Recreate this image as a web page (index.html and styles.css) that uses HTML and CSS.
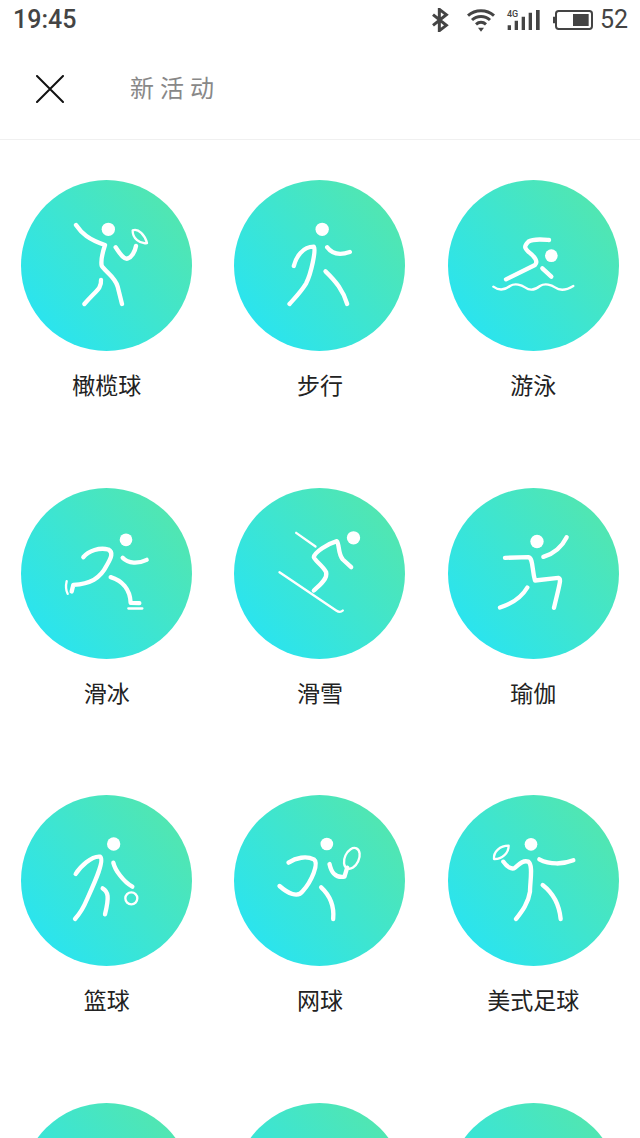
FILE: index.html
```html
<!DOCTYPE html>
<html lang="zh">
<head>
<meta charset="utf-8">
<title>新活动</title>
<link rel="stylesheet" href="styles.css">
</head>
<body>
<div class="page">
  <div class="status">
    <span class="time">19:45</span>
    <div class="status-right">
      <svg class="i-bt" viewBox="0 0 54 72"><path class="st" d="M6 20 L46 52 L25 68 L25 4 L46 20 L6 52"/></svg>
      <svg class="i-wifi" viewBox="0 0 84 69"><path class="st" d="M3 20 C25 0 59 0 81 20"/><path class="st" d="M15 33 C30 19 54 19 69 33"/><path class="st" d="M27 46 C36 38 48 38 57 46"/><path class="fl" d="M33 56 L51 56 L42 68 Z"/></svg>
      <span class="signal">
        <span class="net">4G</span>
        <svg class="i-sig" viewBox="0 0 99 60"><path class="fl" d="M2 46h10v14h-10zM23 32h10v28h-10zM44 20h10v40h-10zM65 8h10v52h-10zM87 0h11v60h-11z"/></svg>
      </span>
      <svg class="i-bat" viewBox="0 0 120 60"><rect class="bat" x="9" y="3" width="108" height="54" rx="8"/><path class="fl" d="M0 20h6v20h-6zM60 12h47v36h-47z"/></svg>
      <span class="level">52</span>
    </div>
  </div>
  <header class="nav">
    <svg class="close" viewBox="0 0 28 28"><path d="M1 1 L27 27 M27 1 L1 27"/></svg>
    <h1 class="title">新活动</h1>
  </header>
  <main class="grid">
    <div class="cell">
      <div class="disc"><svg class="fig" viewBox="-87 -60 513 513">
        <circle class="head" cx="175" cy="88" r="20"/>
        <path d="M78 75 C95 100 115 118 165 135 C160 150 152 180 155 197 C165 215 195 230 203 260 L216 312"/>
        <path d="M153 240 C155 265 140 270 103 312"/>
        <path d="M197 142 C210 160 220 178 232 176 C245 172 255 155 258 138"/>
        <path class="thin" d="M248 91 C265 84 285 105 291 129 C270 133 247 115 248 91 Z"/>
      </svg></div>
      <p class="label">橄榄球</p>
    </div>
    <div class="cell">
      <div class="disc"><svg class="fig" viewBox="-91.5 -60 513 513">
        <circle class="head" cx="173" cy="88" r="20"/>
        <path d="M88 198 C95 170 115 140 148 140 C155 150 140 220 125 250 C110 275 90 295 75 312"/>
        <path d="M183 214 C215 245 235 270 248 312"/>
        <path d="M188 142 C205 165 230 165 256 156"/>
      </svg></div>
      <p class="label">步行</p>
    </div>
    <div class="cell">
      <div class="disc"><svg class="fig" viewBox="-96 -90 513 513">
        <circle class="head" cx="214" cy="137" r="19"/>
        <path d="M207 90 C185 88 160 85 145 95 C130 110 135 115 145 125 C165 140 175 155 165 165 L78 208"/>
        <path d="M187 175 L214 200"/>
        <path class="thin" d="M40 230 C60 245 75 240 90 228 C105 218 125 225 135 232 C150 243 165 240 180 228 C195 218 215 225 225 232 C240 243 260 240 280 228"/>
      </svg></div>
      <p class="label">游泳</p>
    </div>
    <div class="cell">
      <div class="disc"><svg class="fig" viewBox="-87 -82.5 513 513">
        <circle class="head" cx="228" cy="73" r="19"/>
        <path d="M100 125 C115 105 150 95 175 102 C190 110 185 125 170 150 C150 190 120 205 70 208 L65 228"/>
        <path d="M182 185 C215 195 240 220 242 262 L268 263"/>
        <path d="M218 127 C235 145 265 145 290 133"/>
        <path class="thin" d="M50 197 C47 210 48 225 53 235"/>
        <path class="thin" d="M235 279 L277 279"/>
      </svg></div>
      <p class="label">滑冰</p>
    </div>
    <div class="cell">
      <div class="disc"><svg class="fig" viewBox="-91.5 -82.5 513 513">
        <circle class="head" cx="267" cy="67" r="20"/>
        <path d="M148 225 C165 210 190 190 185 170 C175 150 150 135 148 125 C150 110 190 85 217 77 C225 85 220 115 235 132 L260 155"/>
        <path class="thin" d="M95 52 L153 93"/>
        <path class="thin" d="M45 170 L215 285 C222 290 230 290 235 285"/>
      </svg></div>
      <p class="label">滑雪</p>
    </div>
    <div class="cell">
      <div class="disc"><svg class="fig" viewBox="-96 -82.5 513 513">
        <circle class="head" cx="171" cy="78" r="20"/>
        <path d="M190 124 C220 115 245 95 260 65"/>
        <path d="M75 127 L145 125 C160 128 155 160 165 195 L235 187 C245 190 240 200 222 277"/>
        <path d="M142 216 C125 245 95 265 60 276"/>
      </svg></div>
      <p class="label">瑜伽</p>
    </div>
    <div class="cell">
      <div class="disc"><svg class="fig" viewBox="-87 -90 513 513">
        <circle class="head" cx="191" cy="57" r="20"/>
        <path d="M77 147 C90 125 125 92 150 95 C165 105 135 170 110 225 C100 250 90 265 75 282"/>
        <path d="M190 113 C195 135 220 170 247 185"/>
        <path d="M158 190 C175 200 178 215 165 268"/>
        <circle class="thin" cx="244" cy="220" r="18"/>
      </svg></div>
      <p class="label">篮球</p>
    </div>
    <div class="cell">
      <div class="disc"><svg class="fig" viewBox="-91.5 -90 513 513">
        <circle class="head" cx="187" cy="57" r="19"/>
        <path d="M72 113 C95 98 125 92 148 103 C165 115 140 170 115 198 C100 220 70 205 45 183"/>
        <path d="M170 187 C195 210 210 240 206 282"/>
        <path d="M195 117 C200 140 210 160 240 155 L248 128"/>
        <ellipse class="thin" cx="262" cy="100" rx="21" ry="33" transform="rotate(25 262 100)"/>
      </svg></div>
      <p class="label">网球</p>
    </div>
    <div class="cell">
      <div class="disc"><svg class="fig" viewBox="-96 -90 513 513">
        <circle class="head" cx="153" cy="58" r="19"/>
        <path d="M70 110 C80 125 95 135 105 128 C120 115 130 105 145 110 C160 120 150 170 150 200 C145 235 125 260 108 282"/>
        <path d="M178 103 C210 120 250 118 280 106"/>
        <path d="M188 180 C220 205 238 240 242 282"/>
        <path class="thin" d="M42 102 C40 80 60 62 86 62 C86 85 65 103 42 102 Z"/>
      </svg></div>
      <p class="label">美式足球</p>
    </div>
    <div class="cell"><div class="disc"></div></div>
    <div class="cell"><div class="disc"></div></div>
    <div class="cell"><div class="disc"></div></div>
  </main>
</div>
</body>
</html>
```
FILE: styles.css
```css
html, body { margin: 0; padding: 0; background: #fff; }
.page {
  width: 640px;
  height: 1138px;
  overflow: hidden;
  font-family: "Noto Sans CJK SC", Roboto, sans-serif;
}
.status {
  height: 40px;
  box-sizing: border-box;
  padding: 0 12px 0 13px;
  display: flex;
  align-items: center;
  justify-content: space-between;
  color: #444;
  font-family: Roboto, sans-serif;
  font-size: 25px;
  font-weight: 500;
}
.status-right { display: flex; align-items: center; }
.time, .level { line-height: 40px; }
.level { font-weight: 400; margin-left: 7px; }
.status svg { display: block; }
.i-bt { width: 18px; height: 24px; }
.i-wifi { width: 28px; height: 23px; margin-left: 18px; }
.signal { position: relative; display: block; margin-left: 12px; margin-right: 13px; }
.net { position: absolute; left: 0; top: -1px; font-size: 9px; line-height: 10px; font-weight: 500; }
.i-sig { width: 33px; height: 20px; }
.i-bat { width: 40px; height: 20px; }
.st { fill: none; stroke: #444; stroke-width: 9; }
.fl { fill: #444; }
.bat { fill: none; stroke: #444; stroke-width: 6; }

.nav {
  height: 100px;
  box-sizing: border-box;
  border-bottom: 1px solid #f0f0f0;
  display: flex;
  align-items: center;
  padding: 0 0 2px 36px;
}
.close { width: 28px; height: 28px; display: block; flex: none; }
.close path { fill: none; stroke: #111; stroke-width: 2; stroke-linecap: round; }
.title {
  margin: 0 0 3px 66px;
  font-size: 24px;
  line-height: 30px;
  font-weight: 400;
  letter-spacing: 6px;
  color: #888;
}

.grid {
  display: grid;
  grid-template-columns: repeat(3, 1fr);
  grid-auto-rows: 307.5px;
  padding-top: 40px;
}
.cell { display: flex; flex-direction: column; align-items: center; }
.disc {
  width: 171px;
  height: 171px;
  flex: none;
  border-radius: 50%;
  background: linear-gradient(50deg, #2be4ee 14%, #52e6b0 88%);
}
.fig { display: block; width: 171px; height: 171px; }
.fig path, .fig ellipse, .fig circle {
  fill: none;
  stroke: #fff;
  stroke-width: 13;
  stroke-linecap: round;
  stroke-linejoin: round;
}
.fig .thin { stroke-width: 7; }
.fig .head { fill: #fff; stroke: none; }
.label {
  margin: 17px 0 0;
  font-size: 23px;
  line-height: 32px;
  color: #222;
  text-align: center;
}
```
